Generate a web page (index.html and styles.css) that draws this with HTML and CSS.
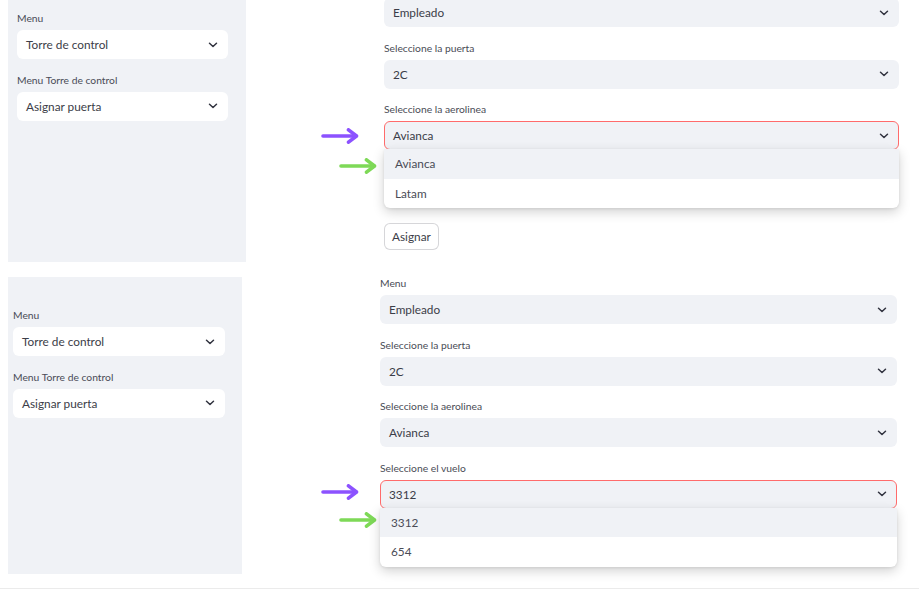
FILE: index.html
```html
<!DOCTYPE html>
<html lang="es">
<head>
<meta charset="utf-8">
<title>Torre de control</title>
<link rel="stylesheet" href="styles.css">
</head>
<body>
<div class="shot shot-top">
  <aside class="sidebar sb-top">
    <div class="widget">
      <div class="label">Menu</div>
      <div class="select select-white"><span>Torre de control</span><svg class="chev" viewBox="0 0 10 6"><polyline points="1.5,1.3 5,4.5 8.5,1.3"/></svg></div>
    </div>
    <div class="widget">
      <div class="label">Menu Torre de control</div>
      <div class="select select-white"><span>Asignar puerta</span><svg class="chev" viewBox="0 0 10 6"><polyline points="1.5,1.3 5,4.5 8.5,1.3"/></svg></div>
    </div>
  </aside>
  <main class="main main-top">
    <div class="widget widget-cut">
      <div class="select"><span>Empleado</span><svg class="chev" viewBox="0 0 10 6"><polyline points="1.5,1.3 5,4.5 8.5,1.3"/></svg></div>
    </div>
    <div class="widget">
      <div class="label">Seleccione la puerta</div>
      <div class="select"><span>2C</span><svg class="chev" viewBox="0 0 10 6"><polyline points="1.5,1.3 5,4.5 8.5,1.3"/></svg></div>
    </div>
    <div class="widget">
      <div class="label">Seleccione la aerolinea</div>
      <div class="select select-open"><span>Avianca</span><svg class="chev" viewBox="0 0 10 6"><polyline points="1.5,1.3 5,4.5 8.5,1.3"/></svg>
        <div class="dropdown">
          <div class="option option-active">Avianca</div>
          <div class="option">Latam</div>
        </div>
      </div>
    </div>
    <button class="btn">Asignar</button>
  </main>
  <svg class="arrow arrow-purple arrow-top-p" viewBox="0 0 38 16"><line x1="2" y1="8" x2="35" y2="8"/><polyline points="27.5,1.8 35.5,8 27.5,14.2"/></svg>
  <svg class="arrow arrow-green arrow-top-g" viewBox="0 0 38 16"><line x1="2" y1="8" x2="35" y2="8"/><polyline points="27.5,1.8 35.5,8 27.5,14.2"/></svg>
</div>

<div class="shot shot-bottom">
  <aside class="sidebar sb-bottom">
    <div class="widget">
      <div class="label">Menu</div>
      <div class="select select-white"><span>Torre de control</span><svg class="chev" viewBox="0 0 10 6"><polyline points="1.5,1.3 5,4.5 8.5,1.3"/></svg></div>
    </div>
    <div class="widget">
      <div class="label">Menu Torre de control</div>
      <div class="select select-white"><span>Asignar puerta</span><svg class="chev" viewBox="0 0 10 6"><polyline points="1.5,1.3 5,4.5 8.5,1.3"/></svg></div>
    </div>
  </aside>
  <main class="main main-bottom">
    <div class="widget">
      <div class="label">Menu</div>
      <div class="select"><span>Empleado</span><svg class="chev" viewBox="0 0 10 6"><polyline points="1.5,1.3 5,4.5 8.5,1.3"/></svg></div>
    </div>
    <div class="widget">
      <div class="label">Seleccione la puerta</div>
      <div class="select"><span>2C</span><svg class="chev" viewBox="0 0 10 6"><polyline points="1.5,1.3 5,4.5 8.5,1.3"/></svg></div>
    </div>
    <div class="widget">
      <div class="label">Seleccione la aerolinea</div>
      <div class="select"><span>Avianca</span><svg class="chev" viewBox="0 0 10 6"><polyline points="1.5,1.3 5,4.5 8.5,1.3"/></svg></div>
    </div>
    <div class="widget">
      <div class="label">Seleccione el vuelo</div>
      <div class="select select-open"><span>3312</span><svg class="chev" viewBox="0 0 10 6"><polyline points="1.5,1.3 5,4.5 8.5,1.3"/></svg>
        <div class="dropdown">
          <div class="option option-active">3312</div>
          <div class="option">654</div>
        </div>
      </div>
    </div>
  </main>
  <svg class="arrow arrow-purple arrow-bot-p" viewBox="0 0 38 16"><line x1="2" y1="8" x2="35" y2="8"/><polyline points="27.5,1.8 35.5,8 27.5,14.2"/></svg>
  <svg class="arrow arrow-green arrow-bot-g" viewBox="0 0 38 16"><line x1="2" y1="8" x2="35" y2="8"/><polyline points="27.5,1.8 35.5,8 27.5,14.2"/></svg>
</div>
<div class="divider"></div>
</body>
</html>
```

FILE: styles.css
```css
html, body {
  margin: 0;
  padding: 0;
  background: #ffffff;
}
body {
  width: 919px;
  height: 589px;
  overflow: hidden;
  font-family: "Source Sans Pro", Lato, "Noto Sans", sans-serif;
  color: #3b3d48;
}

.shot {
  display: flex;
  align-items: flex-start;
  position: relative;
}
.shot-top {
  height: 262px;
}
.shot-bottom {
  margin-top: 15px;
  height: 297px;
}

.sidebar {
  background: #f0f2f6;
  margin-left: 8px;
  box-sizing: border-box;
  flex: none;
  align-self: stretch;
}
.sb-top {
  width: 238px;
  padding: 11px 0 0 9px;
}
.sb-top .select {
  width: 211px;
}
.sb-bottom {
  width: 234px;
  padding: 31px 0 0 5px;
}
.sb-bottom .select {
  width: 212px;
}

.main {
  margin-left: 138px;
  display: flex;
  flex-direction: column;
  align-items: flex-start;
}
.main-top {
  width: 515px;
  margin-top: -2px;
}
.main-bottom {
  width: 517px;
  margin-top: -1px;
}
.main .widget {
  align-self: stretch;
}

.widget {
  display: flex;
  flex-direction: column;
}
.widget + .widget {
  margin-top: 13.5px;
}
.label {
  font-size: 10.3px;
  line-height: 14px;
  margin-bottom: 5px;
  color: #4a4c56;
}

.select {
  position: relative;
  height: 29px;
  box-sizing: border-box;
  border: 1px solid transparent;
  border-radius: 6px;
  background: #f0f2f6;
  display: flex;
  align-items: center;
  justify-content: space-between;
  padding: 0 9px 0 8px;
  font-size: 11.8px;
}
.select-white {
  background: #ffffff;
}
.select-open {
  border-color: #ff6b6b;
}
.chev {
  width: 10px;
  height: 6px;
  fill: none;
  stroke: #31333f;
  stroke-width: 1.5;
  stroke-linecap: round;
  stroke-linejoin: round;
}

.dropdown {
  position: absolute;
  top: 100%;
  left: -1px;
  right: -1px;
  background: #ffffff;
  border-radius: 0 0 6px 6px;
  box-shadow: 0 4px 12px rgba(0, 0, 0, 0.18), 0 1px 3px rgba(0, 0, 0, 0.08);
  overflow: hidden;
  z-index: 5;
}
.option {
  height: 29.5px;
  display: flex;
  align-items: center;
  padding-left: 11px;
  font-size: 11.8px;
  color: #4a4c56;
}
.option-active {
  background: #f0f2f6;
}

.btn {
  margin-top: 73px;
  height: 27px;
  padding: 0 7px;
  box-sizing: border-box;
  background: #ffffff;
  border: 1px solid rgba(49, 51, 63, 0.2);
  border-radius: 6px;
  font-family: inherit;
  font-size: 11.8px;
  color: #3b3d48;
}

.arrow {
  position: absolute;
  width: 38px;
  height: 16px;
  fill: none;
  stroke-width: 3.6;
  stroke-linecap: round;
  stroke-linejoin: round;
}
.arrow-purple {
  stroke: #8c52ff;
}
.arrow-green {
  stroke: #7ed957;
}
.arrow-top-p {
  left: 321px;
  top: 128px;
}
.arrow-top-g {
  left: 339px;
  top: 158px;
}
.arrow-bot-p {
  left: 321px;
  top: 207px;
}
.arrow-bot-g {
  left: 339px;
  top: 235px;
}

.divider {
  margin-top: 14px;
  height: 1px;
  background: #ebebeb;
}
```
